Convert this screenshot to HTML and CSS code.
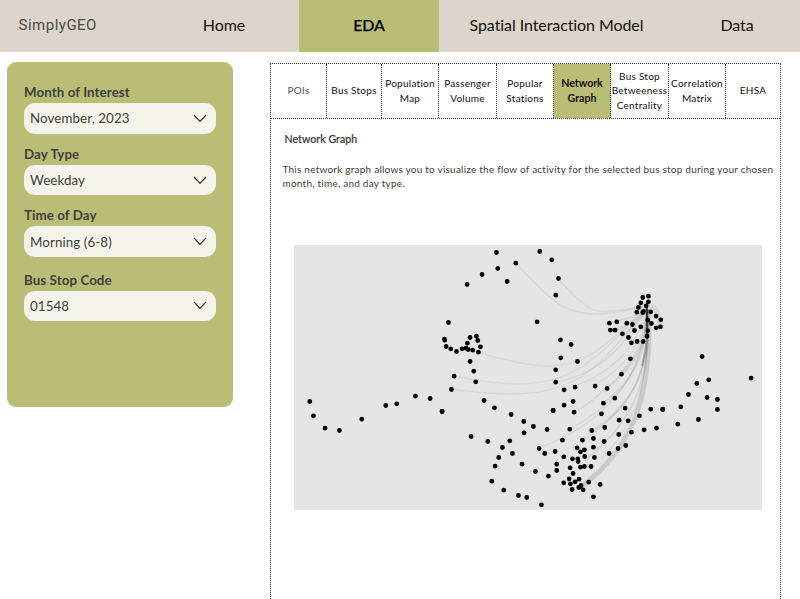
FILE: index.html
```html
<!DOCTYPE html>
<html lang="en">
<head>
<meta charset="utf-8">
<title>SimplyGEO</title>
<link rel="stylesheet" href="styles.css">
</head>
<body>
<nav class="topbar">
  <span class="brand">SimplyGEO</span>
  <span class="nav-item">Home</span>
  <span class="nav-item active">EDA</span>
  <span class="nav-item">Spatial Interaction Model</span>
  <span class="nav-item">Data</span>
</nav>
<main class="layout">
  <aside class="filters">
    <label class="field"><span class="label">Month of Interest</span><span class="select">November, 2023<svg class="chevron" viewBox="0 0 14 9"><path d="M1 1l6 6.4L13 1"/></svg></span></label>
    <label class="field"><span class="label">Day Type</span><span class="select">Weekday<svg class="chevron" viewBox="0 0 14 9"><path d="M1 1l6 6.4L13 1"/></svg></span></label>
    <label class="field"><span class="label">Time of Day</span><span class="select">Morning (6-8)<svg class="chevron" viewBox="0 0 14 9"><path d="M1 1l6 6.4L13 1"/></svg></span></label>
    <label class="field last"><span class="label">Bus Stop Code</span><span class="select">01548<svg class="chevron" viewBox="0 0 14 9"><path d="M1 1l6 6.4L13 1"/></svg></span></label>
  </aside>
  <section class="panel">
    <div class="tabs">
      <div class="tab first">POIs</div>
      <div class="tab">Bus Stops</div>
      <div class="tab">Population<br>Map</div>
      <div class="tab">Passenger<br>Volume</div>
      <div class="tab">Popular<br>Stations</div>
      <div class="tab selected">Network<br>Graph</div>
      <div class="tab tight">Bus Stop<br>Betweeness<br>Centrality</div>
      <div class="tab">Correlation<br>Matrix</div>
      <div class="tab">EHSA</div>
    </div>
    <h1 class="title">Network Graph</h1>
    <p class="description">This network graph allows you to visualize the flow of activity for the selected bus stop during your chosen<br>month, time, and day type.</p>
    <svg class="graph" viewBox="294 245 468 265">
      <g class="edges">
        <path d="M516 263C555 307 570 314 595 314S630 309 645 306"/>
        <path d="M558 279C592 315 596 312 612 311S635 308 645 306"/>
        <path d="M480 353C575 382 590 360 645 308"/>
        <path d="M454 376C565 399 585 370 646 308"/>
        <path d="M451 389C570 406 590 379 646 309"/>
        <path d="M556 382C600 374 624 346 647 309"/>
        <path d="M564 390C612 374 636 350 647 309"/>
        <path d="M539 448C604 423 644 381 647 309"/>
        <path d="M570 429C618 402 644 375 647 309"/>
        <path d="M575 412C623 382 644 349 647 309"/>
        <path d="M595 385C628 366 644 341 647 309"/>
        <path class="strong" d="M603 403C638 378 648 346 647 309"/>
        <path class="strong" d="M607 388C638 366 648 340 647 309"/>
        <path class="strong" d="M582 440C632 410 651 370 648 309"/>
        <path class="strong" d="M592 431C637 403 652 360 648 309"/>
        <path class="strong" d="M585 460C635 421 651 379 648 309"/>
        <path d="M602 458C640 421 650 369 648 309"/>
        <path class="band" d="M577 491C626 452 653 408 649 309"/>
        <path class="band" d="M584 484C642 443 651 378 648 312"/>
        <path class="strong" d="M621 374C643 350 647 330 647 306"/>
        <path class="core" d="M647 303V339"/>
        <path class="core wide" d="M646 306Q650 334 642 366"/>
        <path class="band" d="M648 306C656 306 659 312 660 325"/>
        <path class="strong" d="M608 330C628 329 642 316 647 306M616 321C635 318 642 312 647 306M626 334L646 311"/>
      </g>
      <g class="nodes">
        <path transform="translate(290.1 240.2) scale(.33333)" d="M59 484h0M70 527h0M105 564h0M148 571h0M215 537h0M287 496h0M320 491h0M376 468h0M420 475h0M456 514h0"/>
        <path transform="translate(435.1 240.2) scale(.33333)" d="M184 37h0M314 34h0M350 59h0M242 69h0M188 85h0M141 103h0M96 133h0M216 124h0M370 115h0M362 165h0M40 247h0M306 245h0M28 297h0M29 300h0M33 319h0M47 326h0M64 334h0M81 326h0M93 324h0M99 328h0M113 330h0M130 336h0M136 320h0M128 301h0M124 288h0M105 292h0M97 309h0M105 364h0M116 393h0M57 408h0M376 299h0M377 353h0M362 389h0"/>
        <path transform="translate(435.1 370.2) scale(.33333)" d="M49 58h0M122 35h0M147 91h0M178 113h0M21 124h0M228 133h0M266 154h0M295 169h0M336 178h0M267 188h0M224 212h0M108 199h0M158 214h0M202 232h0M232 250h0M191 262h0M180 288h0M170 333h0M206 360h0M250 376h0M275 382h0M319 404h0M261 282h0M301 304h0M340 318h0M354 121h0M312 235h0M329 250h0M360 244h0M365 282h0M365 301h0M362 36h0"/>
        <path transform="translate(550.1 240.2) scale(.33333)" d="M63 313h0M82 364h0M178 249h0M200 245h0M230 249h0M247 253h0M272 260h0M181 270h0M195 270h0M217 281h0M235 292h0M253 271h0M244 308h0M261 304h0M279 304h0M291 288h0M293 272h0M293 240h0M304 250h0M318 263h0M331 260h0M332 239h0M318 228h0M302 215h0M295 185h0M295 168h0M278 172h0M272 188h0M265 202h0M260 216h0M278 217h0M280 214h0M288 197h0M241 356h0M214 402h0"/>
        <path transform="translate(550.1 370.2) scale(.33333)" d="M75 51h0M135 48h0M171 55h0M42 59h0M194 84h0M160 99h0M69 94h0M42 105h0M9 121h0M72 126h0M154 131h0M225 114h0M302 117h0M338 118h0M268 137h0M234 152h0M207 150h0M164 172h0M125 181h0M59 177h0M206 193h0M244 186h0M282 179h0M319 174h0M227 226h0M204 235h0M177 250h0M162 214h0M130 205h0M97 210h0M37 210h0M130 231h0M81 233h0M103 239h0M91 245h0M104 259h0M133 262h0M41 260h0M67 266h0M83 266h0M84 274h0M60 293h0M91 291h0M103 289h0M123 289h0M69 310h0M57 326h0M87 327h0M75 335h0M61 341h0M41 338h0M116 336h0M150 343h0M66 358h0M86 352h0M93 346h0M99 359h0M130 380h0"/>
        <path transform="translate(660.1 330.2) scale(.33333)" d="M126 79h0M110 160h0M146 149h0M273 144h0M85 193h0M141 202h0M172 208h0M172 238h0M62 230h0M8 237h0M115 268h0M53 282h0"/>
      </g>
    </svg>
  </section>
</main>
</body>
</html>
```
FILE: styles.css
```css
* { box-sizing: border-box; }
body { margin: 0; height: 599px; overflow: hidden; background: #fff; color: #3f403c; font-family: Lato, sans-serif; font-variant-ligatures: none; }
.topbar { display: grid; grid-template-columns: 149px 150px 140px 235px 126px; height: 52px; background: #ddd5cb; border-bottom: 1px solid #e5ded6; align-items: start; font-size: 16px; color: #111; }
.brand { padding: 16px 0 0 18.5px; font: 15px/18px Roboto, sans-serif; letter-spacing: .5px; color: #4a4a48; }
.nav-item { display: flex; align-items: center; justify-content: center; height: 52px; padding-bottom: 3px; letter-spacing: -.08px; }
.active { background: #babd76; color: #000; font-weight: 500; -webkit-text-stroke: .25px #000; }
.layout { display: flex; align-items: flex-start; padding: 10px 0 0 7px; }
.filters { width: 226px; height: 345px; padding: 21px 17px; border-radius: 9px; background: #babd76; }
.field { display: block; margin-bottom: 11px; }
.field.last { margin-top: 13.5px; }
.label { display: block; height: 20px; font-size: 13.33px; line-height: 19px; font-weight: 700; letter-spacing: .08px; }
.select { display: flex; justify-content: space-between; align-items: center; width: 192px; height: 30.7px; padding: 0 9px 0 6px; border-radius: 11px; background: #f5f4eb; font-size: 13.33px; letter-spacing: .1px; }
.chevron { width: 14px; height: 9px; fill: none; stroke: #333; stroke-width: 1.2; }
.panel { width: 511px; height: 560px; margin: 1px 0 0 37px; border: 1px dotted #333; }
.tabs { display: grid; grid-template-columns: 56px 55px 57px 58px 57px 57px 58px 57px 54px; height: 55px; border-bottom: 1px dotted #333; }
.tab { display: flex; align-items: center; justify-content: center; padding-bottom: 1px; border-right: 1px dotted #333; text-align: center; white-space: nowrap; font-size: 10px; line-height: 15px; letter-spacing: .25px; color: #111; }
.tab:last-child { border-right: 0; }
.tab.first { color: #555; }
.tab.tight { line-height: 14.5px; }
.tab.selected { padding-bottom: 2px; background: #babd76; color: #111; font-size: 10.67px; letter-spacing: -.05px; font-weight: 700; }
.title { margin: 13px 0 0 13.5px; font-size: 10.67px; line-height: 14px; font-weight: 500; -webkit-text-stroke: .2px #3f403c; }
.description { margin: 16px 0 0 11.5px; font-size: 10px; line-height: 14px; letter-spacing: .23px; white-space: nowrap; }
.graph { display: block; width: 468px; height: 265px; margin: 55px 0 0 23px; background: #e5e5e5; }
.nodes path { fill: none; stroke: #000; stroke-width: 14.5; stroke-linecap: round; }
.edges path { fill: none; stroke: #000; stroke-opacity: .06; stroke-width: 1.5; }
.edges .strong { stroke-opacity: .07; stroke-width: 2; }
.edges .band { stroke-opacity: .06; stroke-width: 5; }
.edges .core { stroke-opacity: .5; stroke-width: 2; }
.edges .core.wide { stroke-opacity: .25; stroke-width: 2; }
```
